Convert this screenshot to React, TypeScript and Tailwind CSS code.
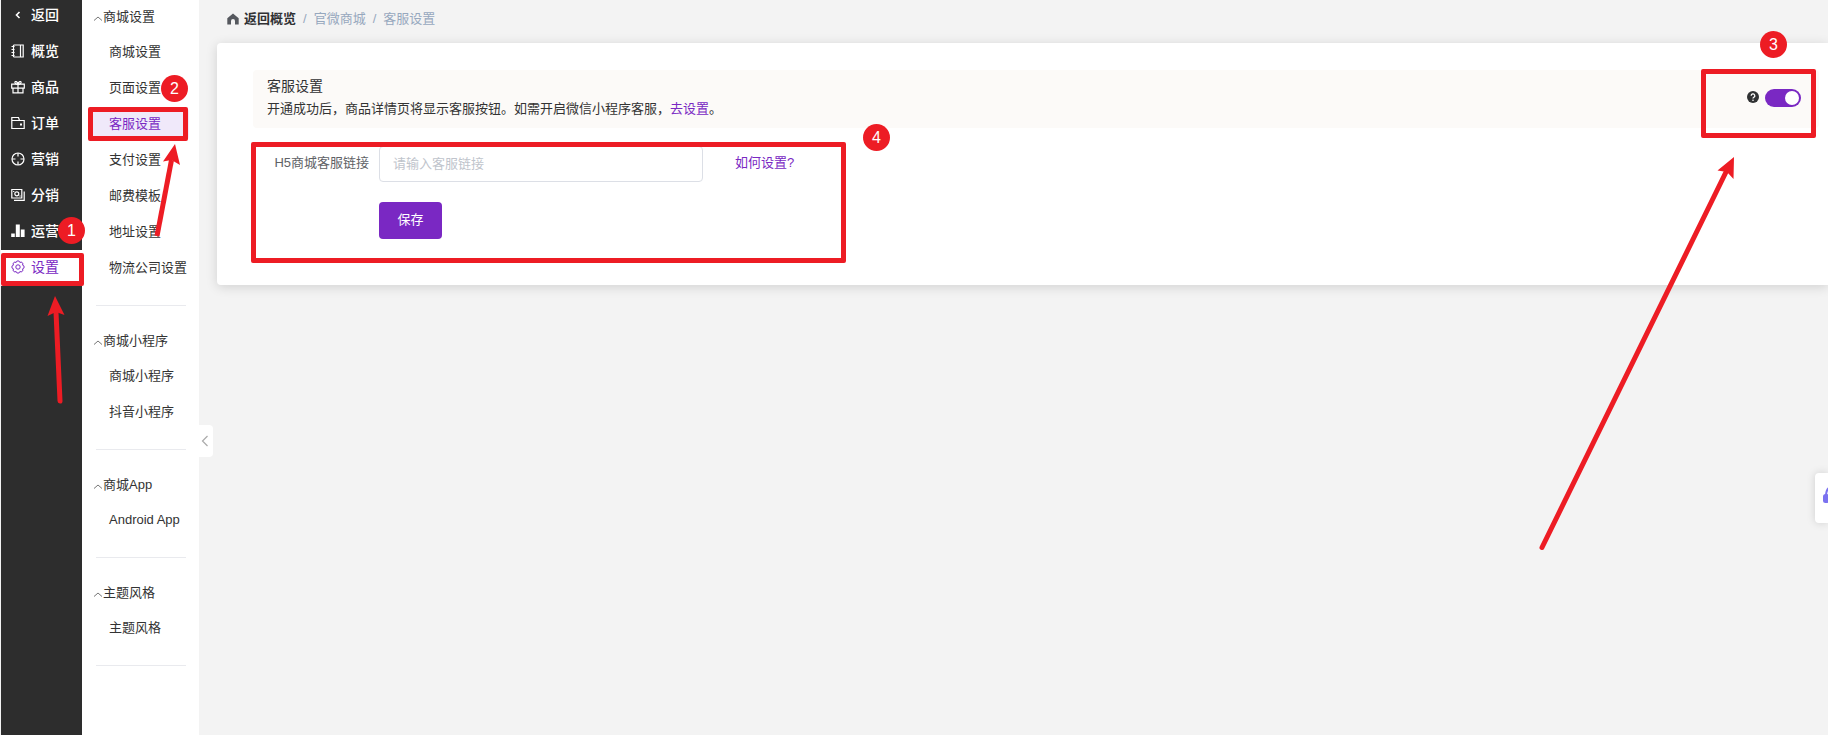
import { useState } from "react";
import type { ReactNode } from "react";

const railItems = [
  { label: "概览", icon: "overview" },
  { label: "商品", icon: "goods" },
  { label: "订单", icon: "order" },
  { label: "营销", icon: "marketing" },
  { label: "分销", icon: "distribution" },
  { label: "运营", icon: "operation" },
  { label: "设置", icon: "settings", active: true },
];

const menuGroups = [
  {
    title: "商城设置",
    items: ["商城设置", "页面设置", "客服设置", "支付设置", "邮费模板", "地址设置", "物流公司设置"],
    active: "客服设置",
  },
  { title: "商城小程序", items: ["商城小程序", "抖音小程序"] },
  { title: "商城App", items: ["Android App"] },
  { title: "主题风格", items: ["主题风格"] },
];

const iconPaths: Record<string, ReactNode> = {
  overview: (
    <>
      <path d="M2.500 1h9.700v12H2.500M9.500 1v12" />
      <path d="M2.500 1v12" />
      <path d="M.5 2.500h3M.5 5.500h3M.5 8.500h3M.5 11.500h3" />
    </>
  ),
  goods: (
    <>
      <path d="M.7 4.200h12.600v4H.7zM2 8.200v4.600h10V8.200M7 4.200v8.600" />
      <path d="M7 4.200C5 4.200 3.700 3.400 3.900 2.200S6.300 1.200 7 4.200c.7-3 2.900-3.200 3.100-2S9 4.200 7 4.200z" />
    </>
  ),
  order: (
    <>
      <path d="M.8 12.500v-11h6.700l1 3M.8 4.500h12.400v8H.8z" />
      <path d="M9 8.500h2" strokeWidth="1.800" />
    </>
  ),
  marketing: (
    <>
      <circle cx="7" cy="7" r="6" />
      <path d="M7 1v3.500M7 9.500v3.500M1 7h3.500M9.500 7H13" />
    </>
  ),
  distribution: (
    <>
      <path d="M.8 1.500h10v8.500H.8z" />
      <path d="M3 12.300h10.200V3.500" />
      <circle cx="5.800" cy="5.800" r="2" />
      <path d="M2.700 3v1M9 7.500v1" />
    </>
  ),
  operation: (
    <path d="M.2 9.500h3.600V13H.2zM4.800 .5h4V13h-4zM9.800 5.500h3.800V13H9.800z" fill="currentColor" stroke="none" />
  ),
  settings: (
    <g strokeWidth="1">
      <path d="M8.880 2.470A1.900 1.900 0 0 1 11.530 5.120A1.900 1.900 0 0 1 11.530 8.880A1.900 1.900 0 0 1 8.880 11.530A1.900 1.900 0 0 1 5.120 11.530A1.900 1.900 0 0 1 2.470 8.880A1.900 1.900 0 0 1 2.470 5.120A1.900 1.900 0 0 1 5.120 2.470A1.900 1.900 0 0 1 8.880 2.470z" />
      <circle cx="7" cy="7" r="2.200" />
    </g>
  ),
};

function RailIcon({ name }: { name: string }) {
  return (
    <svg className="size-3.5 shrink-0" viewBox="0 0 14 14" fill="none" stroke="currentColor" strokeWidth="1.200">
      {iconPaths[name]}
    </svg>
  );
}

function Step({ n, className }: { n: number; className: string }) {
  return (
    <span
      className={`pointer-events-none absolute z-20 flex size-[27px] items-center justify-center rounded-full bg-[#ed1c24] text-base leading-none text-white ${className}`}
    >
      {n}
    </span>
  );
}

function Frame({ className }: { className: string }) {
  return (
    <span className={`pointer-events-none absolute z-10 rounded-[2px] border-5 border-[#ed1c24] ${className}`} />
  );
}

function Rail() {
  return (
    <nav className="relative ml-px w-[81px] shrink-0 bg-[#2d2d2d] text-sm font-medium text-white">
      <a href="#back" className="flex h-[34px] items-center gap-1.5 pb-1 pl-2.5">
        <svg className="size-3.5" viewBox="0 0 14 14" fill="none" stroke="currentColor" strokeWidth="1.600">
          <path d="M8.500 4L5.500 7l3 3" />
        </svg>
        返回
      </a>
      {railItems.map((item) => (
        <a
          key={item.label}
          href="#rail"
          className={`flex h-9 items-center gap-1.5 pb-0.5 pl-2.5 ${
            item.active ? "bg-white font-normal text-[#7a28c3]" : ""
          }`}
        >
          <RailIcon name={item.icon} />
          {item.label}
        </a>
      ))}
      <Step n={1} className="top-[217px] left-[57px]" />
      <Frame className="top-[253px] left-0 h-[33px] w-[83px]" />
    </nav>
  );
}

function SideMenu() {
  return (
    <aside className="relative w-[117px] shrink-0 bg-white pt-0.5 text-[#333]">
      {menuGroups.map((group) => (
        <section key={group.title} className="mb-5">
          <h2 className="flex h-8 items-center pb-0.5 pl-[11px]">
            <svg className="mt-1 size-2.5" viewBox="0 0 10 10" fill="none" stroke="#777" strokeWidth="1">
              <path d="M1 6.500L5 3l4 3.500" />
            </svg>
            {group.title}
          </h2>
          <ul>
            {group.items.map((item) => (
              <li key={item} className="flex h-9 items-center pl-1.5">
                <a
                  href="#menu"
                  className={`flex h-8 w-[101px] items-center pb-px pl-[21px] whitespace-nowrap ${
                    group.active === item ? "rounded-sm bg-[#f0e9fa] text-[#7a28c3]" : ""
                  }`}
                >
                  {item}
                </a>
              </li>
            ))}
          </ul>
          <hr className="mt-[19px] mr-[13px] ml-3.5 border-[#e9eaee]" />
        </section>
      ))}
      <Step n={2} className="top-[75px] left-[79px]" />
      <Frame className="top-[107px] left-1.5 h-[34px] w-[100px]" />
      <button
        type="button"
        aria-label="收起"
        className="absolute top-[425px] left-full flex h-8 w-3.5 items-center justify-center rounded-r bg-white pr-0.5"
      >
        <svg className="h-3 w-2" viewBox="0 0 8 12" fill="none" stroke="#aaa" strokeWidth="1.200">
          <path d="M6.500 1l-5 5 5 5" />
        </svg>
      </button>
    </aside>
  );
}

function Breadcrumb() {
  return (
    <div className="flex h-[43px] items-center gap-[7px] pb-[5px] pl-7 text-[#97a8be]">
      <a href="#overview" className="flex items-center gap-[5px] font-bold text-[#303133]">
        <svg className="size-3" viewBox="0 0 12 12" fill="#55585e">
          <path d="M6 .5L.3 5.300V11.500h3.700V8a2 2 0 0 1 4 0v3.500h3.700V5.300z" />
        </svg>
        返回概览
      </a>
      <span>/</span>
      <span>官微商城</span>
      <span>/</span>
      <span>客服设置</span>
    </div>
  );
}

function ServiceCard() {
  const [enabled, setEnabled] = useState(true);
  const [link, setLink] = useState("");

  return (
    <main className="relative ml-[18px] rounded-l bg-white pt-[27px] pr-[9px] pb-[46px] pl-9 shadow-[0_2px_12px_rgba(0,0,0,0.14)]">
      <div className="flex h-[58px] justify-between rounded bg-[#fcfaf8] pt-1.5 pr-[18px] pl-3.5">
        <div>
          <h1 className="text-sm leading-5 text-[#303133]">客服设置</h1>
          <p className="mt-[3px] leading-5 text-[#333]">
            开通成功后，商品详情页将显示客服按钮。如需开启微信小程序客服，
            <a href="#mini" className="text-[#7a28c3]">去设置</a>。
          </p>
        </div>
        <div className="mt-[13px] flex h-[18px] items-center gap-1.5">
          <svg className="mb-0.5 size-3" viewBox="0 0 12 12">
            <circle cx="6" cy="6" r="6" fill="#303133" />
            <path d="M4.200 4.800a1.800 1.800 0 1 1 2.700 1.500q-.9.500-.9 1.200" fill="none" stroke="#fff" strokeWidth="1.300" />
            <circle cx="6" cy="9.200" r=".8" fill="#fff" />
          </svg>
          <label className="flex">
            <input
              type="checkbox"
              role="switch"
              aria-label="客服设置"
              checked={enabled}
              onChange={(e) => setEnabled(e.target.checked)}
              className="peer sr-only"
            />
            <span className="flex h-[18px] w-9 items-center rounded-full bg-[#dcdfe6] px-0.5 peer-checked:justify-end peer-checked:bg-[#7a28c3]">
              <span className="size-3.5 rounded-full bg-white" />
            </span>
          </label>
        </div>
      </div>

      <form className="mt-[18px] pl-3.5" onSubmit={(e) => e.preventDefault()}>
        <div className="flex items-center">
          <label htmlFor="service-link" className="w-28 shrink-0 pr-2.5 pb-0.5 text-right text-[#606266]">
            H5商城客服链接
          </label>
          <input
            id="service-link"
            type="text"
            value={link}
            onChange={(e) => setLink(e.target.value)}
            placeholder="请输入客服链接"
            className="h-9 w-81 rounded border border-[#dcdfe6] px-[13px] pb-0.5 outline-none placeholder:text-[#c0c4cc]"
          />
          <a href="#help" className="ml-8 pb-0.5 text-[#7a28c3]">如何设置?</a>
        </div>
        <button
          type="submit"
          className="mt-5 ml-28 flex h-[37px] w-[63px] items-center justify-center rounded bg-[#7a28c3] pb-0.5 text-white"
        >
          保存
        </button>
      </form>

      <Step n={4} className="top-[81px] left-[646px]" />
      <Frame className="top-[99px] left-[34px] h-[121px] w-[595px]" />
      <Step n={3} className="-top-3 right-[41px]" />
      <Frame className="top-[26px] right-3 h-[69px] w-[115px]" />
    </main>
  );
}

function Arrows() {
  return (
    <>
      <svg className="pointer-events-none absolute top-0 left-0 z-20 h-[410px] w-[200px]" fill="#ed1c24" stroke="#ed1c24">
        <path d="M60 401L56 312" strokeWidth="5" strokeLinecap="round" />
        <path d="M55 296L47.500 316 56 312 64.500 315z" stroke="none" />
        <path d="M157 236L171.500 160" strokeWidth="5" />
        <path d="M175 144L163 161.500 171.500 160 180 165z" stroke="none" />
      </svg>
      <svg
        className="pointer-events-none absolute top-[150px] right-[88px] z-20 h-[405px] w-[205px]"
        fill="#ed1c24"
        stroke="#ed1c24"
      >
        <path d="M7 397.500L192 20" strokeWidth="5" strokeLinecap="round" />
        <path d="M199 7L182.500 20.500 192 22 198.500 29z" stroke="none" />
      </svg>
    </>
  );
}

export default function App() {
  return (
    <div
      lang="zh-CN"
      className="relative flex min-h-screen overflow-hidden bg-[#f3f3f3] font-['Liberation_Sans','Noto_Sans_CJK_SC',sans-serif] text-[13px]"
    >
      <Rail />
      <SideMenu />
      <div className="min-w-0 flex-1">
        <Breadcrumb />
        <ServiceCard />
      </div>
      <button
        type="button"
        aria-label="在线客服"
        className="absolute top-[473px] right-0 h-[50px] w-[13px] overflow-hidden rounded-l bg-white pb-1.5 shadow-[0_0_8px_rgba(0,0,0,0.15)]"
      >
        <svg className="ml-2 h-5 w-6" viewBox="0 0 24 20" fill="none">
          <path d="M3 11C3 6 5 1 12 1s9 5 9 10" stroke="#7b72f0" strokeWidth="2" />
          <rect x="0" y="9" width="6" height="9" rx="2.500" fill="#7b72f0" />
          <rect x="18" y="9" width="6" height="9" rx="2.500" fill="#7b72f0" />
        </svg>
      </button>
      <Arrows />
    </div>
  );
}
